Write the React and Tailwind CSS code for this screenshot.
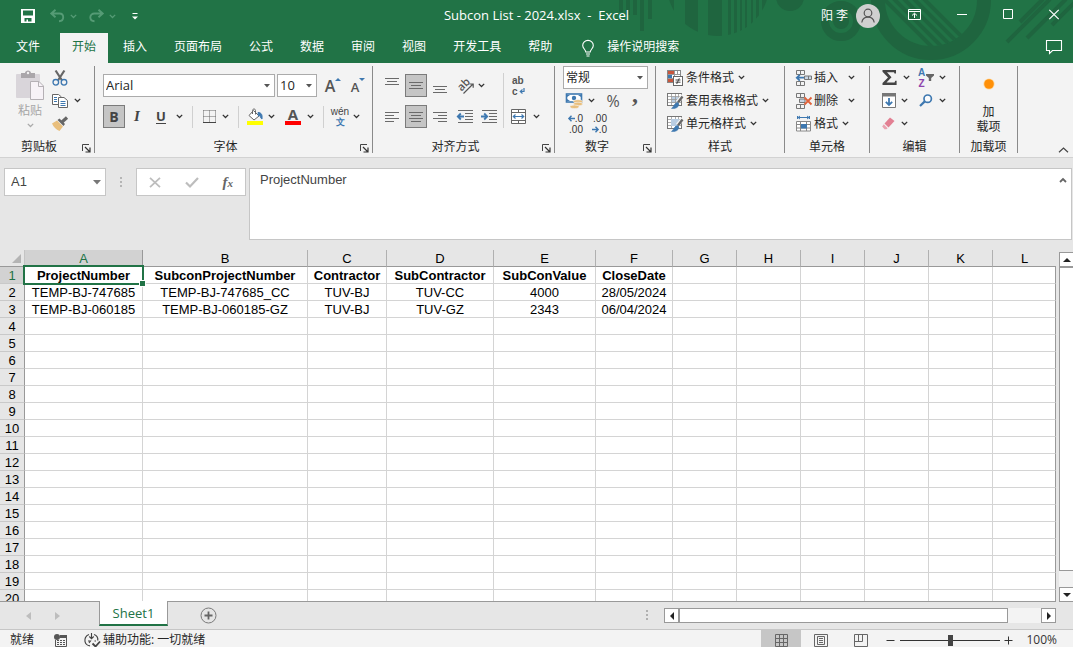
import React, { useState } from "react";

const UI_FONT = "font-['Open_Sans','Noto_Sans_CJK_SC',sans-serif]";
const CELL_FONT = "font-['Liberation_Sans',sans-serif]";

function Svg({ w = 16, h = 16, className = "", children }) {
  return (
    <svg width={w} height={h} viewBox={`0 0 ${w} ${h}`} fill="none" className={`shrink-0 overflow-visible ${className}`} aria-hidden="true">
      {children}
    </svg>
  );
}

function Chevron({ className = "text-[#333]" }) {
  return (
    <Svg w={7} h={5} className={className}>
      <path d="M.8 .9 3.5 3.5 6.2 .9" stroke="currentColor" strokeWidth="1.3" />
    </Svg>
  );
}

function Caret({ className = "text-[#555]" }) {
  return (
    <Svg w={6} h={4} className={className}>
      <path d="M0 0H6L3 3.5Z" fill="currentColor" />
    </Svg>
  );
}

function Tool({ label, active, className = "w-5", children, ...rest }) {
  return (
    <button
      type="button"
      aria-label={label}
      aria-pressed={active}
      className={`flex h-[23px] shrink-0 items-center justify-center ${active ? "border border-[#7b7b7b] bg-[#c5c5c5]" : ""} ${className}`}
      {...rest}
    >
      {children}
    </button>
  );
}

function More({ label, className = "" }) {
  return (
    <Tool label={label} className={`w-3 ${className}`}>
      <Chevron />
    </Tool>
  );
}

function Divider({ className = "h-[22px]" }) {
  return <span className={`w-px shrink-0 bg-[#d0d0d0] ${className}`} />;
}

function Group({ title, launcher, className = "", children }) {
  return (
    <section aria-label={title} className={`flex shrink-0 flex-col border-r border-[#8a8a8a] ${className}`}>
      <div className="h-[73px]">{children}</div>
      <div className="flex h-[14px] items-start">
        <span className="flex-1 text-center leading-4">{title}</span>
        {launcher && (
          <button type="button" aria-label={`${title}设置`} className="flex h-[14px] w-4 items-end justify-end pr-[3px]">
            <Svg w={9} h={9}>
              <path d="M.5 7V.5H7" stroke="#444" />
              <path d="M3 3 7.5 7.5M8 3.5V8H3.5" stroke="#333" strokeWidth="1.2" />
            </Svg>
          </button>
        )}
      </div>
    </section>
  );
}

/* ---------- alignment glyphs ---------- */
function Lines({ rows, w = 14, h = 12 }) {
  return (
    <Svg w={w} h={h}>
      {rows.map(([x1, x2, y]) => (
        <path key={y} d={`M${x1} ${y + 0.5}H${x2}`} stroke="#6a6a6a" />
      ))}
    </Svg>
  );
}

const threeLines = [[0, 14, 0], [2, 12, 3], [0, 14, 6]];
const leftLines = [[0, 14, 0], [0, 9, 3], [0, 14, 6], [0, 9, 9]];
const centerLines = [[0, 14, 0], [2, 12, 3], [0, 14, 6], [2, 12, 9]];
const rightLines = [[0, 14, 0], [5, 14, 3], [0, 14, 6], [5, 14, 9]];

function IndentIcon({ increase }) {
  return (
    <Svg w={17} h={13}>
      <path d="M1 .5H16M8 3.5H16M8 6.5H16M8 9.5H16M1 12.5H16" stroke="#6a6a6a" />
      <path
        d={increase ? "M0 6.5H6M3.2 3.5 6.2 6.5 3.2 9.5" : "M7 6.5H1M3.8 3.5 .8 6.5 3.8 9.5"}
        stroke="#3e78b0"
        strokeWidth="1.8"
      />
    </Svg>
  );
}

function TableGlyph({ children }) {
  return (
    <Svg>
      <rect x=".5" y=".5" width="14" height="12" fill="#fff" stroke="#777" />
      <rect x="5" y="4" width="6" height="6" fill="#b9cde2" />
      <path d="M1 3.5H14M1 6.5H14M1 9.5H14M4.5 1V12M8.5 1V12M11.5 1V12" stroke="#999" strokeWidth=".8" />
      {children}
      <path d="M16 2.5 10.5 9" stroke="#f3f3f3" strokeWidth="4" />
      <path d="M15.5 3.5 11 9.5" stroke="#666" strokeWidth="2.4" />
      <path d="M10.5 9.5C12 10.5 12.2 12 11 13.5 9.5 15.3 7 15.7 4.5 15.4 7 14 6.7 10.5 10.5 9.5Z" fill="#3e78b0" stroke="#3e78b0" strokeWidth=".6" />
    </Svg>
  );
}

function CellsGlyph({ mark }) {
  return (
    <Svg w={17} h={16}>
      <path d="M.5 .5H8.5V4.5H.5ZM4.5 .5V4.5M.5 11.5H8.5V15.5H.5ZM4.5 11.5V15.5" stroke="#777" />
      {mark === "insert" ? (
        <>
          <path d="M8.5 6H15.5V9.5H8.5ZM12.5 6V9.5" fill="#c9d6e4" stroke="#777" />
          <path d="M8 7.7H1M3.8 4.8 .8 7.7 3.8 10.6" stroke="#3e78b0" strokeWidth="1.8" />
        </>
      ) : (
        <>
          <path d="M3.5 6H9V9.5H3.5Z" fill="#c9d6e4" stroke="#777" />
          <path d="M8.5 4.5 15.5 11.5M15.5 4.5 8.5 11.5" stroke="#e0623a" strokeWidth="1.8" />
        </>
      )}
    </Svg>
  );
}

/* ---------- title bar ---------- */
function Backdrop() {
  const stripes = [[667, 7], [685, 13], [708, 14], [728, 3], [734, 3], [740, 2], [745, 2], [751, 2], [756, 3], [762, 8]];
  return (
    <svg className="absolute right-0 top-0" width="473" height="63" viewBox="600 0 473 63" fill="#1f653f" aria-hidden="true">
      <defs>
        <clipPath id="disc"><circle cx="718" cy="-15" r="51" /></clipPath>
        <clipPath id="hole"><circle cx="931" cy="0" r="46" /></clipPath>
      </defs>
      <path d="M619 0h4v12h-4zM626 0h4v15h-4zM633 0h4v15h-4zM640 0h4v31h-4zM648 0h4v19h-4z" />
      <g clipPath="url(#disc)">
        {stripes.map(([x, w]) => <rect key={x} x={x} width={w} height="63" />)}
      </g>
      <circle cx="790" cy="-3" r="14" />
      <circle cx="841" cy="21" r="16" fill="none" stroke="#1f653f" strokeWidth="8" />
      <circle cx="841" cy="21" r="8" />
      <circle cx="931" cy="0" r="53" fill="none" stroke="#1f653f" strokeWidth="14" />
      <g clipPath="url(#hole)" stroke="#1f653f" strokeWidth="4">
        <path d="M875 -10 935 50M885 -10 945 50M895 -10 955 50M905 -10 965 50M915 -10 975 50" />
      </g>
      <path d="M1007 42 1050 -1M1020 22 1043 -1M1027 38 1066 -1M1052 25 1078 -1" stroke="#1f653f" strokeWidth="4" />
    </svg>
  );
}

function TitleBar() {
  return (
    <div className="grid h-8 grid-cols-[1fr_auto_1fr] items-center">
      <div className="flex items-center pl-[21px] text-[#559b75]">
        <button type="button" aria-label="保存" className="w-[29px] text-white">
          <Svg w={14} h={14}>
            <path d="M0 0H14V14H0ZM2 1.5V6.5H12V1.5ZM3.5 9V12.5H5.5V10.5H7V12.5H10.5V9Z" fill="currentColor" fillRule="evenodd" />
          </Svg>
        </button>
        <button type="button" aria-label="撤消" className="w-5">
          <Svg w={15} h={14}>
            <path d="M5.5 .8 1.3 4.5 5.5 8.2M1.5 4.5H9.5C12 4.5 13.2 6.3 13.2 8.3S11.8 12.2 9 12.2" stroke="currentColor" strokeWidth="1.9" />
          </Svg>
        </button>
        <Chevron className="mr-3" />
        <button type="button" aria-label="恢复" className="w-5">
          <Svg w={15} h={14}>
            <path d="M9.5 .8 13.7 4.5 9.5 8.2M13.5 4.5H5.5C3 4.5 1.3 6.3 1.3 8.3S2.7 12.2 5.5 12.2" stroke="currentColor" strokeWidth="1.9" />
          </Svg>
        </button>
        <Chevron className="mr-4" />
        <button type="button" aria-label="自定义快速访问工具栏" className="text-white">
          <Svg w={6} h={7}>
            <path d="M.5 .5H5.5" stroke="currentColor" />
            <path d="M0 3.5H6L3 6.5Z" fill="currentColor" />
          </Svg>
        </button>
      </div>
      <h1 className="whitespace-pre text-[13px]">{"Subcon List - 2024.xlsx  -  Excel"}</h1>
      <div className="flex items-center justify-end pr-[14px]">
        <span className="mr-2 whitespace-pre">阳 李</span>
        <button type="button" aria-label="帐户" className="mr-7">
          <Svg w={24} h={24}>
            <circle cx="12" cy="12" r="12" fill="#d0d0d0" />
            <circle cx="12" cy="9" r="3.8" stroke="#555" strokeWidth="1.2" />
            <path d="M5.8 18.5C6.3 15 8.8 13.2 12 13.2S17.7 15 18.2 18.5" stroke="#555" strokeWidth="1.2" />
          </Svg>
        </button>
        <div className="flex items-center gap-9 pb-1">
          <button type="button" aria-label="功能区显示选项">
            <Svg w={13} h={11}>
              <path d="M.5 .5H12.5V10.5H.5ZM.5 2.5H12.5M6.5 9V4.5M4 6.5 6.5 4.2 9 6.5" stroke="#fff" />
            </Svg>
          </button>
          <button type="button" aria-label="最小化"><Svg w={10} h={11}><path d="M0 5.5H10" stroke="#fff" /></Svg></button>
          <button type="button" aria-label="最大化"><Svg w={10} h={11}><path d="M.5 .5H9.5V9.5H.5Z" stroke="#fff" /></Svg></button>
          <button type="button" aria-label="关闭"><Svg w={10} h={11}><path d="M.3 .8 9.7 10.2M9.7 .8 .3 10.2" stroke="#fff" strokeWidth="1.2" /></Svg></button>
        </div>
      </div>
    </div>
  );
}

const TABS = ["文件", "开始", "插入", "页面布局", "公式", "数据", "审阅", "视图", "开发工具", "帮助"];

function TabRow({ tab, onTab }) {
  return (
    <nav className="flex h-[31px] items-end pl-1">
      <div className="flex gap-[3px]">
        {TABS.map((name) => (
          <button
            key={name}
            type="button"
            onClick={() => onTab(name)}
            className={`h-[30px] px-3 pb-0.5 first:mr-[5px] ${name === tab ? "bg-[#f3f3f3] text-[#217346]" : ""}`}
          >
            {name}
          </button>
        ))}
      </div>
      <button type="button" className="ml-[18px] flex h-[30px] items-center gap-[13px] pb-0.5">
        <Svg w={12} h={17} className="mt-0.5">
          <path d="M3.8 12C3.8 9.8 .7 8.5 .7 5.5A5.2 5 0 0 1 11.3 5.5C11.3 8.5 8.2 9.8 8.2 12ZM4 14H8M4.5 16H7.5" stroke="#fff" strokeWidth="1.1" />
        </Svg>
        操作说明搜索
      </button>
      <button type="button" aria-label="批注" className="ml-auto mr-[11px] pb-2">
        <Svg w={16} h={15}>
          <path d="M.5 .5H15.5V10.5H6.5L3.5 13.5V10.5H.5Z" stroke="#fff" strokeWidth="1.1" />
        </Svg>
      </button>
    </nav>
  );
}

/* ---------- ribbon ---------- */
function ClipboardGroup() {
  return (
    <Group title="剪贴板" launcher className="w-[95px]">
      <div className="flex pl-2.5">
        <button type="button" className="flex w-10 flex-col items-center pt-1 text-[#a6a6a6]">
          <Svg w={28} h={30}>
            <rect x="0" y="4" width="24" height="24" rx="1" fill="#d9d5da" />
            <path d="M5 3H9C9 -.5 15 -.5 15 3H19V8H5Z" fill="#aaa6aa" />
            <circle cx="12" cy="3" r="1.2" fill="#f3f3f3" />
            <path d="M14.5 11.5H23L27.5 16V29.5H14.5Z" fill="#f7f2f7" stroke="#b5b0b5" />
            <path d="M22.5 11.5V16.5H27.5" stroke="#b5b0b5" />
          </Svg>
          <span className="mt-[3px] leading-4">粘贴</span>
          <Chevron className="mt-1 text-[#aaa]" />
        </button>
        <div className="flex flex-col">
          <Tool label="剪切">
            <Svg>
              <path d="M3.6 .5 10.4 11M12.4 .5 5.6 11" stroke="#666" strokeWidth="2.2" />
              <circle cx="3.8" cy="12.3" r="2.8" stroke="#3e78b0" strokeWidth="1.3" fill="#f3f3f3" />
              <circle cx="12" cy="12.3" r="2.8" stroke="#3e78b0" strokeWidth="1.3" fill="#f3f3f3" />
            </Svg>
          </Tool>
          <div className="flex">
            <Tool label="复制">
              <Svg>
                <path d="M.5 1.5H6.5L9.5 4V11.5H.5Z" fill="#fff" stroke="#666" />
                <path d="M2 4.5H5M2 6.5H5M2 8.5H5" stroke="#3e78b0" />
                <path d="M6.5 4.5H12L15.5 7.5V14.5H6.5Z" fill="#fff" stroke="#666" />
                <path d="M8.5 8.5H13.5M8.5 10.5H13.5M8.5 12.5H13.5" stroke="#3e78b0" />
              </Svg>
            </Tool>
            <More label="复制选项" className="ml-px" />
          </div>
          <Tool label="格式刷">
            <Svg>
              <path d="M0 7.5 5 4.5 11 10.5 7.5 15C4 13.5 1.5 11 0 7.5Z" fill="#e9bf7d" />
              <path d="M5.5 4 7.5 2.5 13 8 11.5 10Z" fill="#666" />
              <path d="M10 6 15 1.5" stroke="#666" strokeWidth="3.2" />
            </Svg>
          </Tool>
        </div>
      </div>
    </Group>
  );
}

function Combo({ label, value, options, className = "", text = "text-[13px]" }) {
  return (
    <div className={`relative h-[23px] border border-[#ababab] bg-white ${className}`}>
      <select aria-label={label} defaultValue={value} className={`block h-full w-full appearance-none bg-transparent pl-0.5 text-[#262626] outline-none ${text}`}>
        {options.map((o) => <option key={o}>{o}</option>)}
      </select>
      <Caret className="pointer-events-none absolute right-1 top-[9px] text-[#555]" />
    </div>
  );
}

function FontGroup() {
  const [bold, setBold] = useState(true);
  return (
    <Group title="字体" launcher className="w-[278px]">
      <div className="flex flex-col gap-2 pl-2 pt-2">
        <div className="flex">
          <Combo label="字体名称" value="Arial" options={["Arial", "Calibri", "宋体"]} className="w-[172px]" />
          <Combo label="字号" value="10" options={["8", "9", "10", "11", "12"]} className="ml-0.5 w-10" />
          <Tool label="增大字号" className="ml-1 w-6">
            <span className="text-base font-semibold leading-none text-[#555]">A</span>
            <Svg w={6} h={15}><path d="M0 3H6L3 0Z" fill="#3e78b0" /></Svg>
          </Tool>
          <Tool label="减小字号" className="ml-px w-6">
            <span className="mt-1 text-[13px] font-semibold leading-none text-[#555]">A</span>
            <Svg w={6} h={15}><path d="M0 0H6L3 3Z" fill="#3e78b0" /></Svg>
          </Tool>
        </div>
        <div className="flex items-center text-[#444]">
          <Tool label="加粗" active={bold} onClick={() => setBold(!bold)} className="w-[22px] text-sm font-bold">B</Tool>
          <Tool label="倾斜" className="w-6 font-['Liberation_Serif',serif] text-[15px] font-bold italic">I</Tool>
          <Tool label="下划线" className="w-6 text-[13px] font-bold">
            <span className="border-b border-[#444] leading-[14px]">U</span>
          </Tool>
          <More label="下划线选项" />
          <Divider className="ml-[7px] mr-[6px] h-[22px]" />
          <Tool label="边框">
            <Svg w={13} h={14}>
              <path d="M.5 .5H13M.5 6.5H13M.5 .5V13M6.5 .5V13M12.5 .5V13" stroke="#666" strokeDasharray="1 1" />
              <path d="M0 12.5H13" stroke="#444" />
            </Svg>
          </Tool>
          <More label="边框选项" />
          <Divider className="ml-[7px] mr-[6px] h-[22px]" />
          <Tool label="填充颜色">
            <Svg w={16} h={17}>
              <path d="M6.5 2.5 12 8 7 12 2 7.5Z" fill="#fff" stroke="#666" />
              <path d="M5.5 6V2.5C5.5 .5 8.5 .5 8.5 2.5V6.5" stroke="#666" />
              <path d="M11 4.5C14.5 4.5 15.5 7 15 11 14 10.5 13.5 9.5 13 7.5L11.5 8Z" fill="#3e78b0" stroke="#3e78b0" />
              <path d="M0 13H16V17H0Z" fill="#ff0" />
            </Svg>
          </Tool>
          <More label="填充颜色选项" />
          <Tool label="字体颜色" className="ml-[6px] w-5">
            <span className="flex w-4 flex-col items-center border-b-4 border-[#f00] text-[15px] font-bold leading-[13px] text-[#555]">A</span>
          </Tool>
          <More label="字体颜色选项" className="ml-px" />
          <Divider className="ml-[7px] mr-[6px] h-[22px]" />
          <Tool label="拼音指南" className={`w-5 flex-col ${CELL_FONT}`}>
            <span className="text-[10px] leading-[11px]">wén</span>
            <span className="text-[9px] font-bold leading-[10px] text-[#3e78b0]">文</span>
          </Tool>
          <More label="拼音选项" />
        </div>
      </div>
    </Group>
  );
}

function AlignGroup() {
  return (
    <Group title="对齐方式" launcher className="w-[182px]">
      <div className="flex pl-2">
        <div className="flex flex-col gap-2 pt-2">
          <div className="flex gap-0.5">
            <Tool label="顶端对齐" className="w-[22px] pb-[8px]"><Lines rows={threeLines} h={7} /></Tool>
            <Tool label="垂直居中" active className="w-[22px]"><Lines rows={threeLines} h={7} /></Tool>
            <Tool label="底端对齐" className="w-[22px] pt-[8px]"><Lines rows={threeLines} h={7} /></Tool>
            <Tool label="方向" className="ml-0.5 w-5">
              <Svg w={17} h={16}>
                <text x="1" y="11" fontSize="11" fontWeight="600" fill="#555" transform="rotate(-45 6 8)">ab</text>
                <path d="M6.5 15.5 16 6M12.5 6H16.2V9.7" stroke="#555" strokeWidth="1.2" />
              </Svg>
            </Tool>
            <More label="方向选项" className="-ml-0.5" />
          </div>
          <div className="flex gap-0.5">
            <Tool label="左对齐" className="w-[22px]"><Lines rows={leftLines} h={10} /></Tool>
            <Tool label="居中" active className="w-[22px]"><Lines rows={centerLines} h={10} /></Tool>
            <Tool label="右对齐" className="w-[22px]"><Lines rows={rightLines} h={10} /></Tool>
            <Tool label="减少缩进" className="ml-0.5 w-5"><IndentIcon /></Tool>
            <Tool label="增加缩进" className="ml-0.5 w-5"><IndentIcon increase /></Tool>
          </div>
        </div>
        <Divider className="mx-1 mt-[7px] h-[55px]" />
        <div className="flex flex-col gap-2 pt-2">
          <Tool label="自动换行" className={`w-5 flex-col items-start pl-1 text-[10px] font-bold leading-[11px] text-[#555] ${CELL_FONT}`}>
            <span>ab</span>
            <span className="flex items-center">
              c
              <Svg w={6} h={7} className="ml-px"><path d="M5 0V3.5H1.5M3.5 1.5 1.3 3.5 3.5 5.5" stroke="#3e78b0" strokeWidth="1.2" /></Svg>
            </span>
          </Tool>
          <div className="flex">
            <Tool label="合并后居中">
              <Svg w={15} h={15}>
                <path d="M.5 .5H14.5V14.5H.5ZM.5 3.5H14.5M.5 11.5H14.5M7.5 .5V3.5M7.5 11.5V14.5" stroke="#666" fill="#fff" />
                <path d="M2 7.5H13M4.5 5.5 2.3 7.5 4.5 9.5M10.5 5.5 12.7 7.5 10.5 9.5" stroke="#3e78b0" strokeWidth="1.2" />
              </Svg>
            </Tool>
            <More label="合并选项" className="ml-0.5" />
          </div>
        </div>
      </div>
    </Group>
  );
}

function NumberGroup() {
  return (
    <Group title="数字" launcher className="w-[101px]">
      <div className="pl-2">
        <Combo label="数字格式" value="常规" options={["常规", "数值", "货币", "日期"]} className="w-[85px]" text="text-xs" />
        <div className="flex items-center text-[#555]">
          <Tool label="会计数字格式" className="w-[22px]">
            <Svg w={17} h={16}>
              <rect x=".5" y="1" width="15" height="8" fill="#fff" stroke="#3e78b0" strokeWidth="1.6" />
              <circle cx="8" cy="5" r="2.2" fill="#3e78b0" />
              <path d="M1 2H4L1 4ZM15 2H12L15 4ZM1 8H4L1 6Z" fill="#3e78b0" />
              <ellipse cx="12" cy="8.5" rx="4.6" ry="1.8" fill="#e9bf7d" stroke="#f3f3f3" strokeWidth=".6" />
              <ellipse cx="12" cy="11" rx="4.6" ry="1.8" fill="#e9bf7d" stroke="#f3f3f3" strokeWidth=".6" />
              <ellipse cx="8.5" cy="13.8" rx="4.6" ry="1.8" fill="#e9bf7d" stroke="#f3f3f3" strokeWidth=".6" />
            </Svg>
          </Tool>
          <More label="会计格式选项" />
          <Tool label="百分比样式" className="ml-1.5 w-5 text-base">%</Tool>
          <Tool label="千位分隔样式" className="ml-1 w-4 pb-[14px] font-['Liberation_Serif',serif] text-2xl font-bold leading-none">,</Tool>
        </div>
        <div className={`flex gap-1 text-[10px] leading-[11px] text-[#333] ${CELL_FONT}`}>
          <Tool label="增加小数位数" className="w-5 flex-col items-end">
            <span className="flex items-center">
              <Svg w={7} h={7}><path d="M7 3.5H1M3.5 .8 .9 3.5 3.5 6.2" stroke="#3e78b0" strokeWidth="1.4" /></Svg>.0
            </span>
            <span>.00</span>
          </Tool>
          <Tool label="减少小数位数" className="w-5 flex-col items-end">
            <span>.00</span>
            <span className="flex items-center">
              <Svg w={7} h={7}><path d="M0 3.5H6M3.5 .8 6.1 3.5 3.5 6.2" stroke="#3e78b0" strokeWidth="1.4" /></Svg>.0
            </span>
          </Tool>
        </div>
      </div>
    </Group>
  );
}

function RowButton({ icon, children, gap = "gap-0.5" }) {
  return (
    <button type="button" className={`flex h-[23px] items-center whitespace-nowrap ${gap}`}>
      <span className="flex w-[17px] items-center">{icon}</span>
      <span className="flex items-center gap-1">{children}<Chevron /></span>
    </button>
  );
}

function StyleGroup() {
  return (
    <Group title="样式" className="w-[129px]">
      <div className="flex flex-col items-start pl-[11px]">
        <RowButton icon={
          <Svg>
            <rect x=".5" y=".5" width="13" height="12" fill="#fff" stroke="#888" />
            <path d="M1 1H7V4H1Z" fill="#c8563d" /><path d="M1 5H5V8H1Z" fill="#3e78b0" /><path d="M1 9H6V12H1Z" fill="#c8563d" />
            <path d="M7.5 1V12M10.5 1V5M1 4.5H13M1 8.5H7" stroke="#999" />
            <rect x="6.5" y="6.5" width="9" height="9" fill="#fff" stroke="#666" />
            <path d="M8.5 10H13.5M8.5 12.2H13.5M12.3 8.3 9.7 14" stroke="#444" />
          </Svg>
        }>条件格式</RowButton>
        <RowButton icon={<TableGlyph />}>套用表格格式</RowButton>
        <RowButton icon={<TableGlyph><rect x="4" y="3" width="8" height="7" fill="#b9cde2" /></TableGlyph>}>单元格样式</RowButton>
      </div>
    </Group>
  );
}

function CellsGroup() {
  return (
    <Group title="单元格" className="w-[85px]">
      <div className="flex flex-col items-start pl-[11px]">
        <RowButton gap="gap-px" icon={<CellsGlyph mark="insert" />}><span className="mr-1.5">插入</span></RowButton>
        <RowButton gap="gap-px" icon={<CellsGlyph mark="delete" />}><span className="mr-1.5">删除</span></RowButton>
        <RowButton gap="gap-px" icon={
          <Svg>
            <path d="M2 1.5H13M4 0 2 1.5 4 3M11 0 13 1.5 11 3M1.5 0V3M13.5 0V3" stroke="#3e78b0" />
            <path d="M.5 5.5H14.5V15H.5ZM.5 8.5H14.5M.5 12H14.5M4.5 5.5V15M10.5 5.5V15" fill="#fff" stroke="#888" />
            <rect x="5" y="8" width="6" height="4.5" fill="#3e78b0" />
          </Svg>
        }>格式</RowButton>
      </div>
    </Group>
  );
}

function EditGroup() {
  return (
    <Group title="编辑" className="w-[90px]">
      <div className="flex gap-1 pl-2">
        <div>
          <div className="flex">
            <Tool label="自动求和" className="w-[22px]">
              <Svg w={15} h={15}><path d="M.5 0H14V3.5H12.5L12 2.3H5L9.5 7.2 4.5 12.5H12.5L13.3 10.8H14.6V15H.5V13L6 7.5 .5 1.8Z" fill="#444" /></Svg>
            </Tool>
            <More label="求和选项" />
          </div>
          <div className="flex">
            <Tool label="填充">
              <Svg w={14} h={15} className="ml-px">
                <path d="M.5 .5H13.5V14.5H.5Z" fill="#fff" stroke="#777" /><path d="M0 0H14V3.5H0Z" fill="#777" />
                <path d="M7 5V12M3.8 8.8 7 12 10.2 8.8" stroke="#3e78b0" strokeWidth="1.8" />
              </Svg>
            </Tool>
            <More label="填充选项" />
          </div>
          <div className="flex">
            <Tool label="清除">
              <Svg w={14} h={13} className="ml-px">
                <path d="M8 .5 12.5 4 6.5 10.5 2.5 6.5Z" fill="#e27f92" />
                <path d="M1.8 7.3 5.6 11.2 4.5 12.2 2.5 12.2 .2 9.5Z" fill="#e9a3b0" />
              </Svg>
            </Tool>
            <More label="清除选项" />
          </div>
        </div>
        <div>
          <div className="flex">
            <Tool label="排序和筛选">
              <span className={`flex flex-col text-[10px] font-bold leading-[11px] ${CELL_FONT}`}>
                <span className="text-[#3e78b0]">A</span><span className="text-[#8e44ad]">Z</span>
              </span>
              <Svg w={8} h={7} className="ml-px"><path d="M0 0H8V1.5L5.2 4V7H2.8V4L0 1.5Z" fill="#666" /></Svg>
            </Tool>
            <More label="排序选项" />
          </div>
          <div className="flex">
            <Tool label="查找和选择">
              <Svg w={14} h={13}>
                <circle cx="8.7" cy="4.7" r="3.7" stroke="#3e78b0" strokeWidth="1.7" fill="#f9fbfd" />
                <path d="M5.8 7.4 1 12" stroke="#3e78b0" strokeWidth="2.2" />
              </Svg>
            </Tool>
            <More label="查找选项" />
          </div>
        </div>
      </div>
    </Group>
  );
}

function Ribbon() {
  return (
    <div className="flex h-[95px] shrink-0 border-b border-[#d2d2d2] bg-[#f3f3f3] pt-[3px] text-[#262626]">
      <div className="flex h-[87px] min-w-0">
        <ClipboardGroup />
        <FontGroup />
        <AlignGroup />
        <NumberGroup />
        <StyleGroup />
        <CellsGroup />
        <EditGroup />
        <Group title="加载项" className="w-[58px]">
          <button type="button" className="flex w-full flex-col items-center pt-3 leading-[15px]">
            <Svg w={12} h={12} className="mb-[14px]"><circle cx="6" cy="6" r="5.6" fill="#ffd9a0" /><circle cx="6" cy="6" r="4.8" fill="#ff9008" /></Svg>
            <span>加</span>
            <span>载项</span>
          </button>
        </Group>
      </div>
      <button type="button" aria-label="折叠功能区" className="ml-auto mr-1 self-end pb-1">
        <Svg w={11} h={6}><path d="M1 5.2 5.5 1 10 5.2" stroke="#444" strokeWidth="1.2" /></Svg>
      </button>
    </div>
  );
}

/* ---------- formula bar ---------- */
function FormulaBar() {
  return (
    <div className={`flex h-[92px] shrink-0 items-start pl-1 pr-px pt-[10px] ${CELL_FONT}`}>
      <div className="flex h-7 w-[102px] items-center border border-[#c6c6c6] bg-white pr-1">
        <input aria-label="名称框" defaultValue="A1" className="w-0 flex-1 bg-transparent pl-1.5 text-[13px] text-[#444] outline-none" />
        <button type="button" aria-label="名称列表">
          <Svg w={8} h={5}><path d="M0 0H8L4 4.5Z" fill="#777" /></Svg>
        </button>
      </div>
      <Svg w={30} h={28}>
        <path d="M14 9h2v2h-2zM14 13h2v2h-2zM14 17h2v2h-2z" fill="#b5b5b5" />
      </Svg>
      <div className="flex h-7 w-[110px] items-center justify-around border border-[#c6c6c6] bg-white">
        <button type="button" aria-label="取消"><Svg w={12} h={11}><path d="M1 .8 11 10.2M11 .8 1 10.2" stroke="#bdbdbd" strokeWidth="1.8" /></Svg></button>
        <button type="button" aria-label="输入"><Svg w={14} h={11}><path d="M1 5.5 5 9.5 13 1" stroke="#bdbdbd" strokeWidth="2.2" /></Svg></button>
        <button type="button" aria-label="插入函数" className="flex items-baseline font-['Liberation_Serif',serif] text-[15px] font-bold italic leading-none text-[#666]">
          f<span className="text-[11px]">x</span>
        </button>
      </div>
      <div className="ml-[3px] flex h-[72px] flex-1 border border-[#c6c6c6] bg-white">
        <textarea aria-label="编辑栏" defaultValue="ProjectNumber" className="flex-1 resize-none bg-transparent px-2.5 pt-[3px] text-[13px] leading-4 text-[#444] outline-none" />
        <button type="button" aria-label="折叠编辑栏" className="mr-1 mt-2 self-start">
          <Svg w={8} h={6}><path d="M1 5 4 2 7 5" stroke="#666" strokeWidth="1.8" /></Svg>
        </button>
      </div>
    </div>
  );
}

/* ---------- grid ---------- */
const COLUMNS = [
  ["A", "w-[118px]"], ["B", "w-[165px]"], ["C", "w-[79px]"], ["D", "w-[107px]"], ["E", "w-[102px]"], ["F", "w-[77px]"],
  ["G", "w-16"], ["H", "w-16"], ["I", "w-16"], ["J", "w-16"], ["K", "w-16"], ["L", ""],
];

const DATA = [
  ["ProjectNumber", "SubconProjectNumber", "Contractor", "SubContractor", "SubConValue", "CloseDate"],
  ["TEMP-BJ-747685", "TEMP-BJ-747685_CC", "TUV-BJ", "TUV-CC", "4000", "28/05/2024"],
  ["TEMP-BJ-060185", "TEMP-BJ-060185-GZ", "TUV-BJ", "TUV-GZ", "2343", "06/04/2024"],
];

function Sheet() {
  return (
    <div className={`min-w-0 flex-1 overflow-hidden border-b border-[#999] text-[13px] ${CELL_FONT}`}>
      <table className="w-full table-fixed border-separate border-spacing-0 text-black">
        <colgroup>
          <col className="w-[25px]" />
          {COLUMNS.map(([name, width]) => <col key={name} className={width} />)}
        </colgroup>
        <thead>
          <tr className="h-[17px] leading-[15px]">
            <th className="border-b border-r border-[#999] border-r-[#c4c4c4] p-0">
              <Svg w={9} h={9} className="ml-auto mr-[3px]"><path d="M9 0V9H0Z" fill="#b4b4b4" /></Svg>
            </th>
            {COLUMNS.map(([name]) => (
              <th
                key={name}
                scope="col"
                className={`border-b border-r border-[#999] px-0 pb-0 pt-px font-normal last:border-r-0 ${name === "A" ? "bg-[#d2d2d2] text-[#217346]" : "border-r-[#b0b0b0]"}`}
              >
                {name}
              </th>
            ))}
          </tr>
        </thead>
        <tbody>
          {Array.from({ length: 40 }, (_, r) => (
            <tr key={r} className="h-[17px] leading-[15px]">
              <th
                scope="row"
                className={`border-b border-r border-[#c9c9c9] border-r-[#999] px-0 pb-0 pt-px font-normal ${r === 0 ? "bg-[#d2d2d2] text-[#217346]" : ""}`}
              >
                {r + 1}
              </th>
              {COLUMNS.map(([name], c) => (
                <td
                  key={name}
                  className={`relative whitespace-nowrap border-b border-r border-[#d4d4d4] bg-white px-0 pb-0 pt-px text-center last:border-r-[#999] ${r === 0 ? "font-bold" : ""}`}
                >
                  {DATA[r]?.[c]}
                  {r === 0 && c === 0 && (
                    <span className="pointer-events-none absolute -bottom-0.5 -left-0.5 -right-0.5 -top-0.5 z-10 border-2 border-[#217346]">
                      <span className="absolute -bottom-[4px] -right-[4px] size-[7px] border border-white bg-[#217346]" />
                    </span>
                  )}
                </td>
              ))}
            </tr>
          ))}
        </tbody>
      </table>
    </div>
  );
}

function VerticalScroll() {
  return (
    <div className="flex w-[17px] flex-col overflow-hidden pl-[3px] pt-0.5">
      <div className="flex h-full w-4 flex-col bg-[#f3f3f3]">
        <button type="button" aria-label="向上滚动" className="flex h-[15px] items-center justify-center border border-[#999] bg-white">
          <Svg w={8} h={4}><path d="M0 4H8L4 0Z" fill="#222" /></Svg>
        </button>
        <div className="flex-[304] border border-[#999] bg-white" />
        <div className="flex-[16]" />
        <button type="button" aria-label="向下滚动" className="flex h-[15px] items-center justify-center border border-[#999] bg-white">
          <Svg w={8} h={4}><path d="M0 0H8L4 4Z" fill="#222" /></Svg>
        </button>
      </div>
    </div>
  );
}

/* ---------- bottom bars ---------- */
function SheetBar() {
  return (
    <div className="flex h-[27px] shrink-0 items-center">
      <div className="flex w-[99px] gap-6 pl-[26px] text-[#bdbdbd]">
        <button type="button" aria-label="上一张工作表"><Svg w={5} h={8}><path d="M5 0V8L0 4Z" fill="currentColor" /></Svg></button>
        <button type="button" aria-label="下一张工作表"><Svg w={5} h={8}><path d="M0 0V8L5 4Z" fill="currentColor" /></Svg></button>
      </div>
      <button type="button" className="-mt-px flex h-[25px] w-[69px] items-center justify-center self-start border-b-2 border-l border-r border-[#999] border-b-[#217346] bg-white text-[13px] leading-5 text-[#217346]">
        Sheet1
      </button>
      <button type="button" aria-label="新工作表" className="ml-8">
        <Svg w={17} h={17}>
          <circle cx="8.5" cy="8.5" r="7.5" stroke="#7a7a7a" />
          <path d="M4.5 8.5H12.5M8.5 4.5V12.5" stroke="#666" strokeWidth="1.8" />
        </Svg>
      </button>
      <div className="ml-auto flex h-[15px] w-[427px] items-center pr-[17px]">
        <Svg w={2} h={11} className="mr-4"><path d="M0 0H2V2H0ZM0 4H2V6H0ZM0 8H2V10H0Z" fill="#b0b0b0" /></Svg>
        <div className="flex h-full flex-1 bg-[#f3f3f3]">
          <button type="button" aria-label="向左滚动" className="flex w-[15px] items-center justify-center border border-[#999] bg-white">
            <Svg w={4} h={8}><path d="M4 0V8L0 4Z" fill="#222" /></Svg>
          </button>
          <div className="flex-[330] border border-[#999] bg-white" />
          <div className="flex-[33]" />
          <button type="button" aria-label="向右滚动" className="flex w-[15px] items-center justify-center border border-[#999] bg-white">
            <Svg w={4} h={8}><path d="M0 0V8L4 4Z" fill="#222" /></Svg>
          </button>
        </div>
      </div>
    </div>
  );
}

function StatusBar() {
  const [zoom, setZoom] = useState(100);
  return (
    <footer className="h-[18px] shrink-0 overflow-hidden border-t border-[#c6c6c6] bg-[#f3f3f3] text-[#262626]">
      <div className="flex h-5 items-center pl-2.5 pr-4">
        <span>就绪</span>
        <button type="button" aria-label="录制宏" className="ml-5">
          <Svg w={13} h={13}>
            <path d="M6 1.5H12.5V12.5H1.5V6" stroke="#555" />
            <path d="M6 1H13V4H6Z" fill="#555" /><circle cx="3" cy="3" r="3" fill="#555" />
            <path d="M3 6.5H11M3 8.5H11M3 10.5H11" stroke="#555" strokeDasharray="2 1" />
          </Svg>
        </button>
        <button type="button" className="ml-[17px] flex items-center gap-0.5 whitespace-nowrap">
          <Svg w={17} h={15}>
            <path d="M5 1.5C1.5 2.5 .5 6 1 8.5 1.5 11 3.5 12.5 6 12.8M10 1.5C13 2.5 14 5.5 13.8 7.5" stroke="#444" strokeWidth="1.2" />
            <path d="M7.5 0V5.5M5.3 3.5 7.5 5.7 9.7 3.5M4 8H6.5L5 10M10.5 8H12" stroke="#444" strokeWidth="1.1" />
            <path d="M8.5 10.5 11.5 13.5 16 8.5" stroke="#444" strokeWidth="1.8" />
          </Svg>
          辅助功能: 一切就绪
        </button>
        <div className="ml-auto flex h-full items-center text-[#666]">
          <button type="button" aria-label="普通" aria-pressed="true" className="flex h-full w-10 items-center justify-center bg-[#c6c6c6]">
            <Svg w={13} h={13}><path d="M.5 .5H12.5V12.5H.5ZM.5 4.5H12.5M.5 8.5H12.5M4.5 .5V12.5M8.5 .5V12.5" stroke="currentColor" /></Svg>
          </button>
          <button type="button" aria-label="页面布局" className="flex h-full w-10 items-center justify-center">
            <Svg w={14} h={13}><path d="M.5 .5H13.5V12.5H.5ZM3.5 2.5H10.5V10.5H3.5ZM5 4.5H9M5 6.5H9M5 8.5H9" stroke="currentColor" /></Svg>
          </button>
          <button type="button" aria-label="分页预览" className="flex h-full w-10 items-center justify-center">
            <Svg w={14} h={13}><path d="M.5 .5H13.5V12.5H.5ZM.5 7.5H8.5V.5M4.5 .5V7.5" stroke="currentColor" /></Svg>
          </button>
          <button type="button" aria-label="缩小" className="ml-[5px] w-[14px]" onClick={() => setZoom(Math.max(10, zoom - 10))}>
            <Svg w={9} h={9}><path d="M.5 4.5H8.5" stroke="#333" /></Svg>
          </button>
          <input
            type="range"
            aria-label="显示比例"
            min="10"
            max="190"
            value={zoom}
            onChange={(e) => setZoom(Number(e.target.value))}
            className="h-3 w-[100px] appearance-none bg-transparent [&::-webkit-slider-runnable-track]:h-px [&::-webkit-slider-runnable-track]:bg-[#333] [&::-webkit-slider-thumb]:-mt-[5px] [&::-webkit-slider-thumb]:h-[11px] [&::-webkit-slider-thumb]:w-[5px] [&::-webkit-slider-thumb]:appearance-none [&::-webkit-slider-thumb]:bg-[#444]"
          />
          <button type="button" aria-label="放大" className="ml-1" onClick={() => setZoom(Math.min(190, zoom + 10))}>
            <Svg w={9} h={9}><path d="M.5 4.5H8.5M4.5 .5V8.5" stroke="#333" /></Svg>
          </button>
          <span className="w-11 text-right text-[#333]">{zoom}%</span>
        </div>
      </div>
    </footer>
  );
}

export default function App() {
  const [tab, setTab] = useState("开始");
  return (
    <div className={`flex h-screen w-full flex-col overflow-hidden bg-[#e6e6e6] text-xs ${UI_FONT}`}>
      <header className="relative shrink-0 bg-[#217346] text-white">
        <Backdrop />
        <div className="relative">
          <TitleBar />
          <TabRow tab={tab} onTab={setTab} />
        </div>
      </header>
      <Ribbon />
      <FormulaBar />
      <main className="flex min-h-0 flex-1">
        <Sheet />
        <VerticalScroll />
      </main>
      <SheetBar />
      <StatusBar />
    </div>
  );
}
